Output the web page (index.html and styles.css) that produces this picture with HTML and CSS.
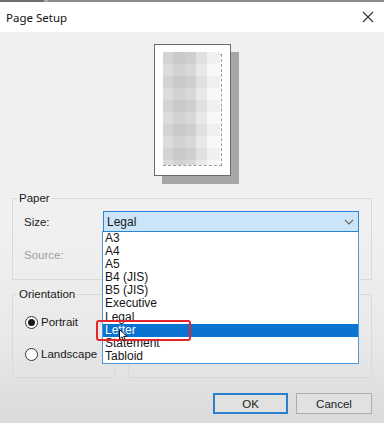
FILE: index.html
```html
<!DOCTYPE html>
<html>
<head>
<meta charset="utf-8">
<link rel="stylesheet" href="styles.css">
</head>
<body>
<div class="dialog">
  <div class="topstrip"></div>
  <div class="titlebar">
    <span class="title">Page Setup</span>
    <svg class="close" width="12" height="12" viewBox="0 0 12 12"><path d="M1 1L11 11M11 1L1 11" stroke="#333" stroke-width="1.1" fill="none"/></svg>
  </div>
  <div class="content">
    <div class="preview">
      <div class="page">
        <div class="margins"><div class="blur"></div></div>
      </div>
    </div>
    <fieldset class="group paper">
      <legend>Paper</legend>
      <div class="gbody paper-body">
        <div class="row">
          <label class="lbl">Size:</label>
          <div class="combo">
            <span>Legal</span>
            <svg width="10" height="6" viewBox="0 0 10 6"><path d="M1 1L5 5L9 1" stroke="#666" stroke-width="1.1" fill="none"/></svg>
          </div>
        </div>
        <div class="row">
          <label class="lbl disabled">Source:</label>
          <div class="combo off"></div>
        </div>
      </div>
    </fieldset>
    <div class="lower">
      <fieldset class="group orient">
        <legend>Orientation</legend>
        <div class="gbody orient-body">
          <div class="radio"><span class="dot on"></span>Portrait</div>
          <div class="radio"><span class="dot"></span>Landscape</div>
        </div>
      </fieldset>
      <fieldset class="group margins-group">
        <legend>Margins (inches)</legend>
      </fieldset>
    </div>
    <div class="buttons">
      <button class="btn ok">OK</button>
      <button class="btn">Cancel</button>
    </div>
  </div>
  <ul class="list">
    <li>A3</li>
    <li>A4</li>
    <li>A5</li>
    <li>B4 (JIS)</li>
    <li>B5 (JIS)</li>
    <li>Executive</li>
    <li>Legal</li>
    <li class="sel">Letter</li>
    <li>Statement</li>
    <li>Tabloid</li>
  </ul>
  <div class="redbox"></div>
  <svg class="cursor" width="9" height="13" viewBox="0 0 9 13"><path d="M0.5 0.5L0.5 10L3 7.8L4.8 12L6.3 11.3L4.6 7.3L8 7.3Z" fill="#fff" stroke="#000" stroke-width="0.9"/></svg>
</div>
</body>
</html>
```
FILE: styles.css
```css
* { box-sizing: border-box; }
html, body { margin: 0; padding: 0; }
body {
  width: 384px;
  height: 423px;
  overflow: hidden;
  font-family: "Liberation Sans", Arial, sans-serif;
  font-size: 11px;
  color: #1a1a1a;
  background: #f0f0f0;
}
.dialog {
  position: relative;
  width: 384px;
  height: 423px;
  background: linear-gradient(to bottom, #f0f0f0 0%, #f0f0f0 55%, #e9e9e9 80%, #dadada 100%);
}
.topstrip {
  height: 2px;
  background: linear-gradient(to right, #6e6e6e 0 44px, #a8a8a8 44px 48px, #8c8c8c 48px);
}
.titlebar {
  height: 30px;
  background: #fff;
  display: flex;
  align-items: center;
  justify-content: space-between;
  padding: 0 10px 0 6px;
}
.title {
  font-family: "Noto Sans", "Open Sans", sans-serif;
  font-size: 11.5px;
  color: #111;
}
.close { display: block; }
.content { display: flex; flex-direction: column; }
.preview {
  height: 159px;
  padding-top: 12px;
  display: flex;
  justify-content: center;
}
.page {
  width: 77px;
  height: 132px;
  background: #fff;
  border: 1px solid #6a6a6a;
  box-shadow: 8px 8px 0 #a6a6a6;
  padding: 9px 8px 9px 8px;
}
.margins {
  width: 100%;
  height: 100%;
  border: 1px dashed #9a9a9a;
  position: relative;
}
.blur {
  position: absolute;
  left: -1px; top: -3px; right: 1px; bottom: 0;
  background:
    repeating-linear-gradient(to bottom, rgba(0,0,0,0.03) 0 12px, rgba(255,255,255,0.06) 12px 24px),
    linear-gradient(to right, #dadada 0 18%, #cfcfcf 18% 38%, #d6d6d6 38% 58%, #e8e8e8 58% 78%, #f8f8f8 78%);
}
.group {
  margin: 0;
  border: 1px solid #d9d9d9;
  padding: 0;
  min-width: 0;
}
.group legend {
  font-size: 11.5px;
  line-height: 14px;
  padding: 0 2px;
  margin-left: 4px;
  color: #1a1a1a;
}
.paper {
  margin: 0 12px;
  height: 89px;
}
.paper-body { padding: 6px 12px 0 11px; }
.row {
  display: flex;
  align-items: center;
  height: 21px;
}
.row + .row { margin-top: 12px; }
.lbl { width: 79px; font-size: 11.5px; }
.disabled { color: #a0a0a0; }
.combo {
  flex: 1;
  height: 21px;
  border: 1px solid #2a83d4;
  background: #cce4f7;
  display: flex;
  align-items: center;
  justify-content: space-between;
  padding: 0 4px 0 3px;
  font-size: 12px;
}
.combo svg { display: block; }
.combo.off { background: #f0f0f0; border-color: #ccc; }
.lower {
  display: flex;
  gap: 13px;
  margin: 7px 12px 0 12px;
  height: 91px;
}
.orient { width: 103px; }
.orient-body { padding: 14px 0 0 12px; }
.margins-group { flex: 1; }
.margins-group legend { visibility: hidden; }
.radio {
  display: flex;
  align-items: center;
  height: 14px;
  font-size: 11.5px;
}
.radio + .radio { margin-top: 18px; }
.dot {
  width: 13px;
  height: 13px;
  border: 1px solid #333;
  border-radius: 50%;
  background: #fff;
  margin-right: 3px;
  position: relative;
}
.dot.on::after {
  content: "";
  position: absolute;
  left: 2px; top: 2px;
  width: 7px; height: 7px;
  border-radius: 50%;
  background: #1a1a1a;
}
.buttons {
  display: flex;
  justify-content: flex-end;
  gap: 8px;
  padding: 15px 12px 0 0;
}
.btn {
  width: 76px;
  height: 21px;
  font-family: "Liberation Sans", Arial, sans-serif;
  font-size: 11.5px;
  color: #1a1a1a;
  background: #e1e1e1;
  border: 1px solid #adadad;
  padding: 0;
}
.btn.ok { width: 75px; border: 2px solid #2a7fd0; }
.list {
  position: absolute;
  left: 102px;
  top: 231px;
  width: 257px;
  height: 133px;
  margin: 0;
  padding: 0;
  list-style: none;
  background: #fff;
  border: 1px solid #4b9ae0;
  border-top-color: #2a83d4;
  font-size: 12px;
}
.list li {
  height: 13.1px;
  line-height: 13.1px;
  padding-left: 2px;
  color: #141414;
}
.list li.sel { background: #0a74d0; color: #fff; }
.redbox {
  position: absolute;
  left: 96px;
  top: 320px;
  width: 95px;
  height: 21px;
  border: 2px solid #e4262c;
  border-radius: 3px;
}
.cursor {
  position: absolute;
  left: 119px;
  top: 329px;
}
```
